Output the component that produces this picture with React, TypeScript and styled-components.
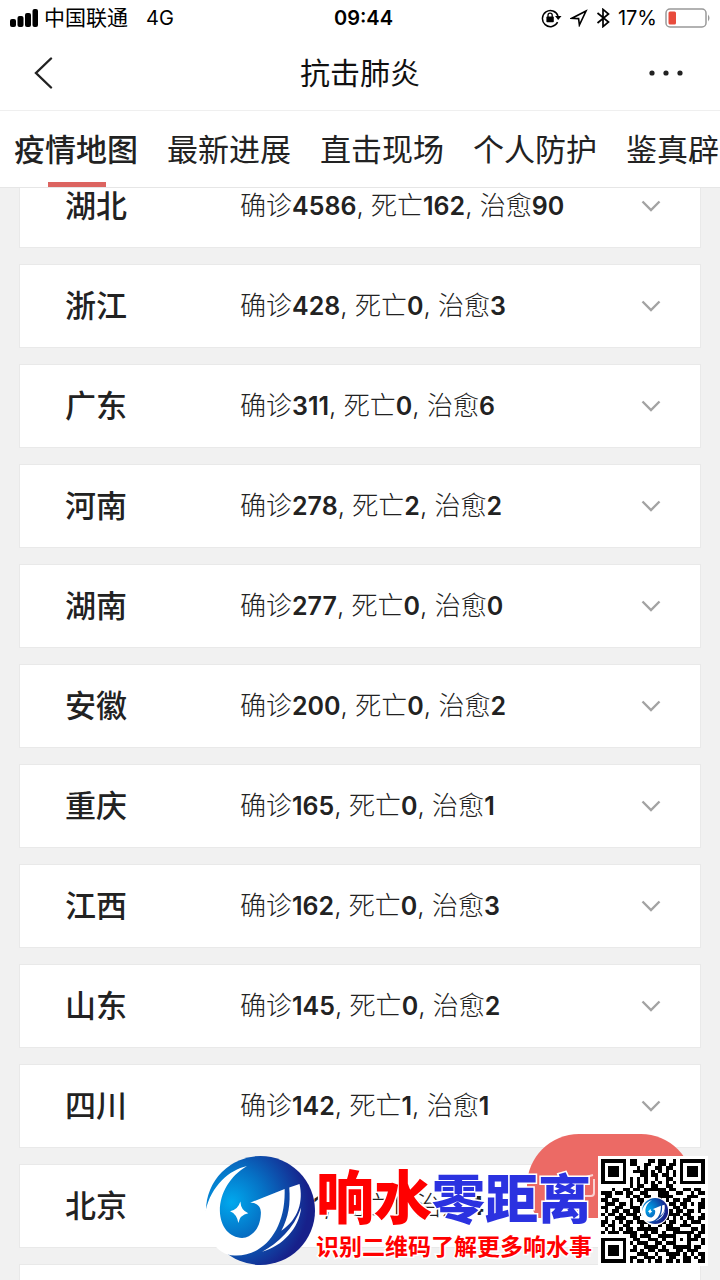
import React from "react";
import styled, { createGlobalStyle } from "styled-components";

const GlobalStyle = createGlobalStyle`
  * { box-sizing: border-box; }
  body {
    margin: 0;
    background: #f1f1f1;
    color: #222;
    font-family: Inter, "Noto Sans CJK SC", sans-serif;
  }
  button { font: inherit; color: inherit; border: 0; padding: 0; background: none; }
`;

const Screen = styled.div`
  position: relative;
  display: flex;
  flex-direction: column;
  height: 100vh;
  overflow: hidden;
`;

const Header = styled.header`
  position: relative;
  z-index: 1;
  flex: none;
  background: #fff;
  border-bottom: 1px solid #e6e6e6;
`;

const StatusBar = styled.div`
  display: grid;
  grid-template-columns: 1fr auto 1fr;
  align-items: center;
  height: 36px;
  padding: 0 9px 0 10px;
  font-size: 20px;
  color: #000;
`;

const StatusGroup = styled.div<{ $end?: boolean }>`
  display: flex;
  align-items: center;
  justify-content: ${(p) => (p.$end ? "flex-end" : "flex-start")};
  gap: ${(p) => (p.$end ? "8px" : "6px")};
`;

const Carrier = styled.span`
  font-size: 21px;
  line-height: 24px;
`;

const Network = styled.span`
  margin-left: 12px;
`;

const Clock = styled.time`
  padding-left: 6px;
  font-weight: 600;
`;

const NavBar = styled.div`
  display: grid;
  grid-template-columns: 1fr auto 1fr;
  align-items: center;
  height: 75px;
  padding: 0 34px;
  border-bottom: 1px solid #efefef;
`;

const NavButton = styled.button<{ $end?: boolean }>`
  display: flex;
  justify-self: ${(p) => (p.$end ? "end" : "start")};
`;

const Title = styled.h1`
  margin: 0;
  font-size: 30px;
  line-height: 40px;
  font-weight: 400;
  color: #111;
`;

const Tabs = styled.nav`
  display: flex;
  gap: 29px;
  height: 76px;
  padding-left: 14px;
  overflow: hidden;
`;

const Tab = styled.a<{ $active?: boolean }>`
  position: relative;
  flex: none;
  font-size: 31px;
  line-height: 78px;
  height: 76px;
  color: #222;
  text-decoration: none;
  font-weight: ${(p) => (p.$active ? 500 : 400)};
  &::after {
    content: "";
    display: ${(p) => (p.$active ? "block" : "none")};
    position: absolute;
    left: calc(50% - 28px);
    bottom: 0;
    width: 58px;
    height: 5px;
    background: #dc6460;
  }
`;

const Main = styled.main`
  flex: 1;
  min-height: 0;
  overflow: hidden;
`;

/* The list is scrolled a little way under the header. */
const List = styled.ul`
  display: flex;
  flex-direction: column;
  gap: 16px;
  margin: -24px 0 0;
  padding: 0 19px;
  list-style: none;
`;

const Card = styled.li`
  height: 84px;
  background: #fff;
  border: 1px solid #e9e9e9;
`;

const CardButton = styled.button`
  display: flex;
  align-items: center;
  width: 100%;
  height: 100%;
  padding: 0 39px 0 45px;
  text-align: left;
`;

const Province = styled.span`
  width: 175px;
  font-size: 31px;
  line-height: 40px;
  font-weight: 500;
`;

const Stats = styled.span`
  flex: 1;
  font-size: 26px;
  line-height: 36px;
  font-weight: 300;
  white-space: nowrap;
  b { font-size: 25px; font-weight: 600; }
`;

const FabFrame = styled.div`
  position: absolute;
  right: 27px;
  bottom: 62px;
  width: 166px;
  height: 84px;
  overflow: hidden;
`;

const Fab = styled.button`
  display: flex;
  align-items: center;
  width: 100%;
  height: 104px;
  padding-left: 38px;
  border-radius: 52px;
  background: #ec6a65;
`;

const Watermark = styled.aside`
  position: absolute;
  right: 12px;
  bottom: 14px;
  display: flex;
  align-items: center;
`;

const Slogan = styled.div`
  display: flex;
  flex-direction: column;
  width: 282px;
  color: #f00;
  font-family: "Noto Sans CJK SC", sans-serif;
  font-weight: 700;
  white-space: nowrap;
  paint-order: stroke fill;
  -webkit-text-stroke: 3px #fff;
`;

const SloganName = styled.strong`
  font-size: 58px;
  line-height: 66px;
`;

const SloganBlue = styled.span`
  font-size: 53px;
  color: #2b32e0;
`;

const SloganNote = styled.span`
  font-size: 23px;
  line-height: 32px;
`;

const QrBox = styled.div`
  display: flex;
  padding: 3px;
  background: #fff;
`;

const rows: [string, number, number, number][] = [
  ["湖北", 4586, 162, 90],
  ["浙江", 428, 0, 3],
  ["广东", 311, 0, 6],
  ["河南", 278, 2, 2],
  ["湖南", 277, 0, 0],
  ["安徽", 200, 0, 2],
  ["重庆", 165, 0, 1],
  ["江西", 162, 0, 3],
  ["山东", 145, 0, 2],
  ["四川", 142, 1, 1],
  ["北京", 111, 1, 4],
];

const tabs = ["疫情地图", "最新进展", "直击现场", "个人防护", "鉴真辟谣"];

const qr = [
  "11111110110001101100101111111",
  "10000010110011001101101000001",
  "10111010001010011011001011101",
  "10111010011110101010101011101",
  "10111010000110110110101011101",
  "10000010101010010011001000001",
  "11111110101010101010101111111",
  "00000000101100110011000000000",
  "00010011011011111101100110110",
  "11101101100110001110011001011",
  "01100001011011001111000011100",
  "11011000101100111010110110001",
  "01110110100111000001101101011",
  "11001100111010000000110100011",
  "01011011011000000001011011010",
  "10110101110100000011110110001",
  "01001110011010000010101011011",
  "11010101101110000101100101110",
  "10110011000101001011001110001",
  "01010101101111110011110001101",
  "10111011110010110100111111011",
  "00000000110111001111100010110",
  "11111110011001110100101011101",
  "10000010101110011011100010001",
  "10111010010011110100111110110",
  "10111010110101101110011011100",
  "10111010001110010011110101011",
  "10000010110011101001100110101",
  "11111110101101011011010110011",
];

const Emblem = ({ size, id, ...rest }: { size: number; id: string; x?: number; y?: number }) => (
  <svg width={size} height={size} viewBox="15 77 336 336" aria-hidden="true" {...rest}>
    <defs>
      <radialGradient id={id} gradientUnits="userSpaceOnUse" cx="95" cy="220" r="235">
        <stop offset="0" stopColor="#00a9ee" />
        <stop offset="0.45" stopColor="#0670c4" />
        <stop offset="1" stopColor="#17208a" />
      </radialGradient>
    </defs>
    <circle cx="183" cy="245" r="165" fill={`url(#${id})`} />
    <path
      fill="#fff"
      d="M142 110C88 122 34 170 17 245C10 310 45 382 105 381C195 384 260 300 256 180L150 222C174 220 186 234 184 256C182 290 168 316 138 327C96 334 61 300 60 246C60 190 92 140 142 110Z"
    />
    <path
      fill="#fff"
      d="M270 175L301 165C313 215 299 272 246 306C268 265 274 225 270 175ZM306 236C300 300 250 352 188 370C236 344 284 300 306 236Z"
    />
    <path fill="#fff" d="M122 218Q124 246 146 253Q120 258 116 283Q112 256 91 247Q115 243 122 218Z" />
  </svg>
);

const QrCode = () => (
  <svg width="104" height="104" viewBox="0 0 29 29" role="img" aria-label="二维码">
    <path
      shapeRendering="crispEdges"
      d={qr
        .map((line, y) => line.split("").map((c, x) => (c === "1" ? `M${x} ${y}h1v1h-1z` : "")).join(""))
        .join("")}
    />
    <circle cx="15" cy="14.5" r="4" fill="#fff" />
    <Emblem id="emblemSmall" size={7.4} x={11.4} y={10.8} />
  </svg>
);

const Chevron = () => (
  <svg width="20" height="12" viewBox="0 0 20 12" fill="none" stroke="#a3a3a3" strokeWidth="2.4" aria-hidden="true">
    <path d="M1.5 1.5L10 10L18.5 1.5" />
  </svg>
);

export default function App() {
  return (
    <Screen>
      <GlobalStyle />
      <Header>
        <StatusBar>
          <StatusGroup>
            <svg width="28" height="18" viewBox="0 0 28 18" aria-hidden="true">
              <rect x="0" y="10" width="6" height="8" rx="2" />
              <rect x="7.5" y="7" width="6" height="11" rx="2" />
              <rect x="15" y="4" width="6" height="14" rx="2" />
              <rect x="22.5" y="0" width="5.5" height="18" rx="2" />
            </svg>
            <Carrier>中国联通</Carrier>
            <Network>4G</Network>
          </StatusGroup>
          <Clock>09:44</Clock>
          <StatusGroup $end>
            <svg width="21" height="20" viewBox="0 0 21 20" aria-hidden="true">
              <path d="M16.6 14.2A8 8 0 1 1 17 8" fill="none" stroke="#000" strokeWidth="1.5" />
              <path d="M14 8h6.500l-3.300 4z" />
              <rect x="5.400" y="8.600" width="7.400" height="5.600" rx="0.800" />
              <path d="M7 9V7.200a2.100 2.100 0 0 1 4.200 0V9" fill="none" stroke="#000" strokeWidth="1.3" />
            </svg>
            <svg width="18" height="18" viewBox="0 0 18 18" aria-hidden="true">
              <path d="M16 2L2 9.200l6.600.4L9.400 16z" fill="none" stroke="#000" strokeWidth="1.6" />
            </svg>
            <svg width="14" height="20" viewBox="0 0 14 20" aria-hidden="true">
              <path d="M1.500 5l11 9L7 18.600V1.400L12.500 6l-11 9" fill="none" stroke="#000" strokeWidth="1.7" />
            </svg>
            <span>17%</span>
            <svg width="46" height="20" viewBox="0 0 46 20" aria-hidden="true">
              <rect x="1" y="1" width="40" height="18" rx="4" fill="none" stroke="#999" strokeWidth="1.5" />
              <rect x="3.500" y="3.500" width="7.500" height="13" rx="1.500" fill="#e84b3c" />
              <path d="M43 6.500q3 3.500 0 7z" fill="#999" />
            </svg>
          </StatusGroup>
        </StatusBar>
        <NavBar>
          <NavButton aria-label="返回">
            <svg width="20" height="32" viewBox="0 0 20 32" fill="none" stroke="#222" strokeWidth="2.400" strokeLinecap="round">
              <path d="M17 1.500L2 16l15 14.500" />
            </svg>
          </NavButton>
          <Title>抗击肺炎</Title>
          <NavButton $end aria-label="更多">
            <svg width="38" height="8" viewBox="0 0 38 8" fill="#222">
              <circle cx="4" cy="4" r="2.600" />
              <circle cx="18" cy="4" r="2.600" />
              <circle cx="32" cy="4" r="2.600" />
            </svg>
          </NavButton>
        </NavBar>
        <Tabs>
          {tabs.map((t, i) => (
            <Tab key={t} href="#" $active={i === 0}>
              {t}
            </Tab>
          ))}
        </Tabs>
      </Header>
      <Main>
        <List>
          {rows.map(([name, confirmed, dead, cured]) => (
            <Card key={name}>
              <CardButton>
                <Province>{name}</Province>
                <Stats>
                  确诊<b>{confirmed}</b>, 死亡<b>{dead}</b>, 治愈<b>{cured}</b>
                </Stats>
                <Chevron />
              </CardButton>
            </Card>
          ))}
          <Card />
        </List>
      </Main>
      <FabFrame>
        <Fab aria-label="求助">
          <svg width="34" height="36" viewBox="0 0 34 36" fill="none" stroke="#f9d3d1" strokeWidth="2" aria-hidden="true">
            <path d="M18 10L28 7M29 11V25q0 3-3 3H20" />
          </svg>
        </Fab>
      </FabFrame>
      <Watermark>
        <Emblem id="emblem" size={111} />
        <Slogan>
          <SloganName>
            响水<SloganBlue>零距离</SloganBlue>
          </SloganName>
          <SloganNote>识别二维码了解更多响水事</SloganNote>
        </Slogan>
        <QrBox>
          <QrCode />
        </QrBox>
      </Watermark>
    </Screen>
  );
}
